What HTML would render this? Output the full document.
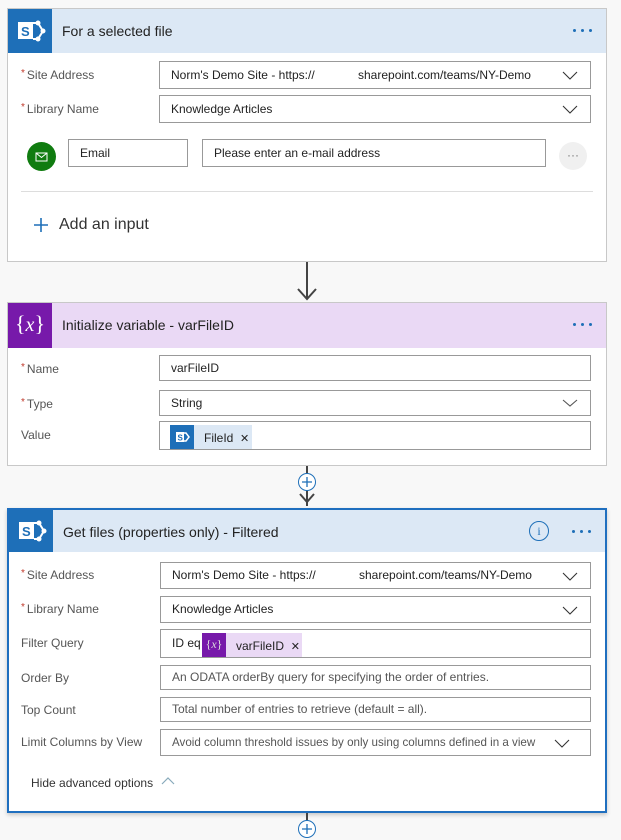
<!DOCTYPE html><html><head><style>
body{margin:0;width:621px;height:839px;background:#f8f8f8;font-family:"Liberation Sans",sans-serif;position:relative;overflow:hidden;font-size:12px;color:#333}
.a{position:absolute}
.card{position:absolute;background:#fff;border:1px solid #c8c8c8;box-sizing:border-box}
.hd{position:absolute;left:0;top:0;right:0;height:44px}
.ic{position:absolute;left:0;top:0;width:44px;height:44px}
.ttl{position:absolute;left:54px;top:14px;font-size:14px;color:#222}
.dots{position:absolute;right:13px;top:20px;width:20px;height:4px}
.dots i{position:absolute;top:0;width:3px;height:3px;border-radius:50%;background:#1e6fb8}
.lbl{position:absolute;font-size:12px;color:#555}
.lbl b{color:#c0392b;font-weight:normal;font-size:10px;vertical-align:top;margin-right:2px}
.box{position:absolute;border:1px solid #999;box-sizing:border-box;background:#fff;font-size:12px;color:#222;padding-left:11px;line-height:24px;white-space:nowrap;overflow:hidden}
.chev{position:absolute;right:12px;top:6px}
</style></head><body>
<!-- card 1 -->
<div class="card" style="left:7px;top:8px;width:600px;height:254px">
 <div class="hd" style="background:#dce8f5"></div>
 <div class="ic" style="background:#1e6fb8"><svg width="44" height="44"><rect x="10" y="13" width="15" height="17" fill="#fff"/><text x="13" y="27" font-size="13" font-weight="bold" fill="#1e6fb8" font-family="Liberation Sans">S</text><path d="M25 14 L30 14 L35 22 L30 30 L25 30" fill="none" stroke="#fff" stroke-width="2"/><circle cx="30" cy="14" r="2.5" fill="#fff"/><circle cx="35" cy="22" r="2.5" fill="#fff"/><circle cx="30" cy="30" r="2.5" fill="#fff"/></svg></div>
 <div class="ttl">For a selected file</div>
 <div class="dots"><i style="left:0"></i><i style="left:8px"></i><i style="left:16px"></i></div>
</div>
<div class="lbl" style="left:21px;top:68px"><b>*</b>Site Address</div>
<div class="box" style="left:159px;top:61px;width:432px;height:28px;line-height:26px">Norm's Demo Site - https://&nbsp;&nbsp;&nbsp;&nbsp;&nbsp;&nbsp;&nbsp;&nbsp;&nbsp;&nbsp;&nbsp;&nbsp;&nbsp;sharepoint.com/teams/NY-Demo<svg class="chev" width="16" height="14"><path d="M1 4 L8 11 L15 4" fill="none" stroke="#333" stroke-width="1.1"/></svg></div>
<div class="lbl" style="left:21px;top:102px"><b>*</b>Library Name</div>
<div class="box" style="left:159px;top:95px;width:432px;height:28px;line-height:26px">Knowledge Articles<svg class="chev" width="16" height="14"><path d="M1 4 L8 11 L15 4" fill="none" stroke="#333" stroke-width="1.1"/></svg></div>
<div class="a" style="left:27px;top:142px;width:29px;height:29px;border-radius:50%;background:#107c10"><svg width="29" height="29"><rect x="9" y="11" width="11" height="8" fill="none" stroke="#fff"/><path d="M9 11 L14.5 15.5 L20 11" fill="none" stroke="#fff"/></svg></div>
<div class="box" style="left:68px;top:139px;width:120px;height:28px;line-height:26px">Email</div>
<div class="box" style="left:202px;top:139px;width:344px;height:28px;line-height:26px">Please enter an e-mail address</div>
<div class="a" style="left:559px;top:142px;width:28px;height:28px;border-radius:50%;background:#f0f0f0;color:#777;text-align:center;line-height:26px;font-size:12px">···</div>
<div class="a" style="left:21px;top:191px;width:572px;height:1px;background:#ddd"></div>
<svg class="a" style="left:34px;top:218px" width="14" height="14"><path d="M7 0 V14 M0 7 H14" stroke="#1e6fb8" stroke-width="1.6"/></svg>
<div class="a" style="left:59px;top:216px;font-size:16px;color:#333">Add an input</div>
<!-- arrow -->
<div class="a" style="left:306px;top:262px;width:2px;height:36px;background:#444"></div>
<svg class="a" style="left:297px;top:287px" width="20" height="14"><path d="M1 2 L10 12 L19 2" fill="none" stroke="#444" stroke-width="2"/></svg>
<!-- card 2 -->
<div class="card" style="left:7px;top:302px;width:600px;height:164px">
 <div class="hd" style="background:#ead9f5;height:45px"></div>
 <div class="ic" style="background:#7719aa;height:45px;color:#fff;font-family:'Liberation Serif',serif;font-size:22px;text-align:center;line-height:42px"><span>{</span><i style="font-size:20px">x</i><span>}</span></div>
 <div class="ttl">Initialize variable - varFileID</div>
 <div class="dots"><i style="left:0"></i><i style="left:8px"></i><i style="left:16px"></i></div>
</div>
<div class="lbl" style="left:21px;top:362px"><b>*</b>Name</div>
<div class="box" style="left:159px;top:355px;width:432px;height:26px">varFileID</div>
<div class="lbl" style="left:21px;top:397px"><b>*</b>Type</div>
<div class="box" style="left:159px;top:390px;width:432px;height:26px">String<svg class="chev" style="top:5px" width="16" height="14"><path d="M1 4 L8 10 L15 4" fill="none" stroke="#555" stroke-width="1.1"/></svg></div>
<div class="lbl" style="left:21px;top:428px">Value</div>
<div class="box" style="left:159px;top:421px;width:432px;height:29px"></div>
<div class="a" style="left:170px;top:425px;width:82px;height:24px;background:#dce8f5"></div>
<div class="a" style="left:170px;top:425px;width:24px;height:24px;background:#1e6fb8"><svg width="24" height="24"><rect x="6" y="7" width="8" height="10" fill="#fff"/><text x="7.5" y="15.5" font-size="8" font-weight="bold" fill="#1e6fb8">S</text><path d="M14 8 L16 8 L19 12 L16 16 L14 16" fill="none" stroke="#fff" stroke-width="1.5"/></svg></div>
<div class="a" style="left:204px;top:431px;font-size:12px;color:#222">FileId&nbsp;&nbsp;<span style="font-size:11px">✕</span></div>
<!-- connector -->
<div class="a" style="left:306px;top:466px;width:2px;height:40px;background:#444"></div>
<div class="a" style="left:298px;top:473px;width:16px;height:16px;border:1px solid #1e6fb8;border-radius:50%;background:#fff"><svg width="16" height="16"><path d="M8 3 V13 M3 8 H13" stroke="#1e6fb8" stroke-width="1.3"/></svg></div>
<svg class="a" style="left:299px;top:492px" width="16" height="12"><path d="M1 2 L8 10 L15 2" fill="none" stroke="#444" stroke-width="2"/></svg>
<!-- card 3 -->
<div class="card" style="left:7px;top:508px;width:600px;height:305px;border:2px solid #1f6fbf;box-shadow:0 2px 4px rgba(0,0,0,.2)">
 <div class="hd" style="background:#dce8f5;height:42px"></div>
 <div class="ic" style="background:#1e6fb8;height:42px"><svg width="44" height="42"><rect x="10" y="12" width="15" height="17" fill="#fff"/><text x="13" y="26" font-size="13" font-weight="bold" fill="#1e6fb8">S</text><path d="M25 13 L30 13 L35 21 L30 29 L25 29" fill="none" stroke="#fff" stroke-width="2"/><circle cx="30" cy="13" r="2.5" fill="#fff"/><circle cx="35" cy="21" r="2.5" fill="#fff"/><circle cx="30" cy="29" r="2.5" fill="#fff"/></svg></div>
 <div class="ttl" style="top:14px">Get files (properties only) - Filtered</div>
 <div class="a" style="left:520px;top:11px;width:18px;height:18px;border:1.5px solid #1e6fb8;border-radius:50%;color:#1e6fb8;text-align:center;font-size:12px;line-height:18px;font-family:'Liberation Serif',serif">i</div>
 <div class="dots" style="top:20px"><i style="left:0"></i><i style="left:8px"></i><i style="left:16px"></i></div>
</div>
<div class="lbl" style="left:21px;top:568px"><b>*</b>Site Address</div>
<div class="box" style="left:160px;top:562px;width:431px;height:27px;line-height:25px">Norm's Demo Site - https://&nbsp;&nbsp;&nbsp;&nbsp;&nbsp;&nbsp;&nbsp;&nbsp;&nbsp;&nbsp;&nbsp;&nbsp;&nbsp;sharepoint.com/teams/NY-Demo<svg class="chev" width="16" height="14"><path d="M1 4 L8 11 L15 4" fill="none" stroke="#333" stroke-width="1.1"/></svg></div>
<div class="lbl" style="left:21px;top:602px"><b>*</b>Library Name</div>
<div class="box" style="left:160px;top:596px;width:431px;height:27px;line-height:25px">Knowledge Articles<svg class="chev" width="16" height="14"><path d="M1 4 L8 11 L15 4" fill="none" stroke="#333" stroke-width="1.1"/></svg></div>
<div class="lbl" style="left:21px;top:636px">Filter Query</div>
<div class="box" style="left:160px;top:629px;width:431px;height:29px;line-height:26px">ID eq</div>
<div class="a" style="left:202px;top:633px;width:100px;height:24px;background:#ead9f5"></div>
<div class="a" style="left:202px;top:633px;width:24px;height:24px;background:#7719aa;color:#ddd;font-family:'Liberation Serif',serif;font-size:12px;text-align:center;line-height:22px">{<i>x</i>}</div>
<div class="a" style="left:236px;top:639px;font-size:12px;color:#222">varFileID&nbsp;&nbsp;<span style="font-size:11px">✕</span></div>
<div class="lbl" style="left:21px;top:671px">Order By</div>
<div class="box" style="left:160px;top:665px;width:431px;height:25px;line-height:23px;color:#555">An ODATA orderBy query for specifying the order of entries.</div>
<div class="lbl" style="left:21px;top:703px">Top Count</div>
<div class="box" style="left:160px;top:697px;width:431px;height:25px;line-height:23px;color:#555">Total number of entries to retrieve (default = all).</div>
<div class="lbl" style="left:21px;top:735px">Limit Columns by View</div>
<div class="box" style="left:160px;top:729px;width:431px;height:27px;line-height:25px;color:#555;font-size:11.6px">Avoid column threshold issues by only using columns defined in a view<svg class="chev" style="right:20px" width="16" height="14"><path d="M1 4 L8 11 L15 4" fill="none" stroke="#333" stroke-width="1.1"/></svg></div>
<div class="a" style="left:31px;top:776px;font-size:12px;color:#333">Hide advanced options</div>
<svg class="a" style="left:161px;top:776px" width="14" height="10"><path d="M1 8 L7 2 L13 8" fill="none" stroke="#8ab" stroke-width="1.2"/></svg>
<div class="a" style="left:306px;top:813px;width:2px;height:8px;background:#444"></div>
<div class="a" style="left:298px;top:820px;width:16px;height:16px;border:1px solid #1e6fb8;border-radius:50%;background:#fff"><svg width="16" height="16"><path d="M8 3 V13 M3 8 H13" stroke="#1e6fb8" stroke-width="1.3"/></svg></div>
</body></html>
